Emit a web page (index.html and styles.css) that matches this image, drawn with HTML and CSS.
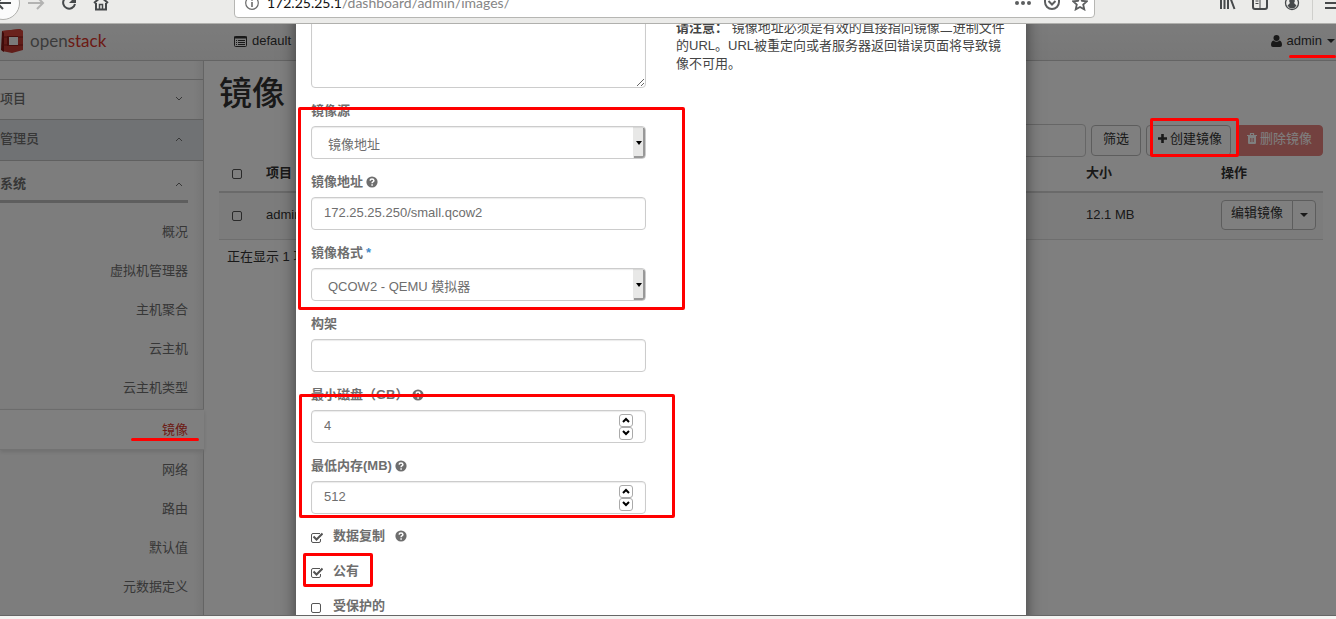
FILE: index.html
```html
<!DOCTYPE html>
<html lang="zh-CN">
<head>
  <meta charset="UTF-8" />
  <meta name="viewport" content="width=device-width, initial-scale=1.0"/>
  <title>镜像 - OpenStack Dashboard</title>
  <link rel="stylesheet" href="styles.css">
</head>
<body>

  <svg class="defs" aria-hidden="true">
    <symbol id="help" viewBox="0 0 12 12">
      <circle cx="6" cy="6" r="5.6" fill="currentColor"/>
      <path d="M4.1 4.6Q4.2 2.9 6 2.9T7.9 4.5Q7.9 5.4 6.9 5.9Q6.1 6.3 6.1 7.2M6.1 8.2V9.7" fill="none" stroke="#fff" stroke-width="1.5"/>
    </symbol>
    <symbol id="down" viewBox="0 0 8 6"><path d="M1 1l3 3 3-3" fill="none" stroke="currentColor"/></symbol>
    <symbol id="up" viewBox="0 0 8 6"><path d="M1 5l3-3 3 3" fill="none" stroke="currentColor"/></symbol>
    <symbol id="caret" viewBox="0 0 8 4"><path d="M0 0h8L4 4z" fill="currentColor"/></symbol>
  </svg>

  <div class="browser-bar">
    <div class="browser-row">
      <button class="back" aria-label="后退"><svg width="18" height="16" viewBox="0 0 18 16"><path d="M17 8H3M9 2L3 8l6 6" fill="none" stroke="#46494b" stroke-width="2"/></svg></button>
      <button class="tool forward" aria-label="前进"><svg width="18" height="16" viewBox="0 0 18 16"><path d="M1 8h14M10 2l6 6-6 6" fill="none" stroke="#b3b3b2" stroke-width="2"/></svg></button>
      <button class="tool" aria-label="刷新"><svg width="16" height="16" viewBox="0 0 16 16"><path d="M12.5 3.5A6 6 0 1 0 14 9" fill="none" stroke="#46494b" stroke-width="2"/><path d="M15 1v7H8z" fill="#46494b"/></svg></button>
      <button class="tool" aria-label="主页"><svg width="16" height="16" viewBox="0 0 16 16"><path d="M1 8l7-6 7 6M3 8v6.5h10V8" fill="none" stroke="#46494b" stroke-width="2"/><path d="M6.5 15V9.5h3V15" fill="none" stroke="#46494b" stroke-width="1.5"/></svg></button>
      <div class="url-box">
        <svg width="14" height="14" viewBox="0 0 14 14"><circle cx="7" cy="7" r="6.3" fill="none" stroke="#6b6b6b" stroke-width="1.2"/><path d="M7 6v5M7 3v1.8" stroke="#6b6b6b" stroke-width="1.6"/></svg>
        <div class="url"><b>172.25.25.1</b>/dashboard/admin/images/</div>
        <svg width="18" height="16" viewBox="0 0 18 16" fill="#5c5e5f"><circle cx="3" cy="8" r="2"/><circle cx="9" cy="8" r="2"/><circle cx="15" cy="8" r="2"/></svg>
        <svg width="16" height="16" viewBox="0 0 16 16" fill="none" stroke="#5c5e5f" stroke-width="2"><path d="M1 2h14v5a7 7 0 0 1-14 0z"/><path d="M4.5 6L8 9.5 11.5 6"/></svg>
        <svg width="16" height="16" viewBox="0 0 16 16"><path d="M8 1.5l2 4.3 4.8.5-3.6 3.2 1.1 4.9L8 12l-4.3 2.4 1.1-4.9L1.2 6.3 6 5.8z" fill="none" stroke="#5c5e5f" stroke-width="1.8"/></svg>
      </div>
      <button class="tool" aria-label="书库"><svg width="17" height="16" viewBox="0 0 17 16"><path d="M2 2v12M5.5 2v12M9 2v12M11 2l4.5 12" stroke="#46494b" stroke-width="2"/></svg></button>
      <button class="tool" aria-label="侧栏"><svg width="16" height="16" viewBox="0 0 16 16"><rect x="1" y="2" width="14" height="12" rx="2" fill="none" stroke="#46494b" stroke-width="2"/><path d="M8 2v12M3.5 6h3M3.5 8.5h3" stroke="#46494b"/></svg></button>
      <button class="tool" aria-label="帐户"><svg width="16" height="16" viewBox="0 0 16 16"><circle cx="8" cy="8" r="6.5" fill="none" stroke="#46494b" stroke-width="1.3"/><path d="M8 3a3 3 0 0 1 2 5l2.5 2.5A5 5 0 0 1 3.5 10.5L6 8a3 3 0 0 1 2-5z" fill="#46494b"/></svg></button>
      <div class="bar-sep"></div>
      <button class="tool menu" aria-label="菜单"><svg width="16" height="16" viewBox="0 0 16 16"><path d="M0 3h16M0 8h16M0 13h16" stroke="#46494b" stroke-width="2"/></svg></button>
    </div>
  </div>

  <div class="page">
    <header class="navbar">
      <a class="brand" href="#">
        <svg width="24" height="24" viewBox="0 0 24 24">
          <path d="M2 2L20 0 23 2V21L12 24 2 22z" fill="#c23a32"/>
          <path d="M2 2L20 0 23 2V8H2z" fill="#d4453a"/>
          <path d="M2 2L4 4V23L1 21z" fill="#7f1512"/>
          <path d="M7 7h11v10H7z" fill="#8f1d18"/>
          <path d="M9 8h9v8H9z" fill="#f5f5f5"/>
          <path d="M2 8h6M18 8h5M2 16h6M18 16h5" stroke="#8f1d18"/>
        </svg>
        <span>open<em>stack</em></span>
      </a>
      <a class="domain" href="#">
        <svg width="13" height="11" viewBox="0 0 13 11"><rect x=".5" y=".5" width="12" height="10" rx="1" fill="none" stroke="#333"/><path d="M0 1.5h13" stroke="#333" stroke-width="2"/><path d="M2 4.5h1M4 4.5h7M2 6.5h1M4 6.5h7M2 8.5h1M4 8.5h7" stroke="#333"/></svg>
        default
      </a>
      <a class="user" href="#">
        <svg width="11" height="12" viewBox="0 0 11 12" fill="#333"><circle cx="5.5" cy="3" r="3"/><path d="M0 10Q0 6 2.5 5.5Q5.5 8 8.5 5.5Q11 6 11 10Q11 12 9 12H2Q0 12 0 10z"/></svg>
        admin
        <svg width="8" height="4"><use href="#caret"/></svg>
      </a>
    </header>

    <div class="content">
      <nav class="sidebar">
        <a class="panel" href="#">项目 <svg width="8" height="6"><use href="#down"/></svg></a>
        <a class="panel open" href="#">管理员 <svg width="8" height="6"><use href="#up"/></svg></a>
        <a class="group" href="#">系统 <svg width="8" height="6"><use href="#up"/></svg></a>
        <ul>
          <li><a href="#">概况</a></li>
          <li><a href="#">虚拟机管理器</a></li>
          <li><a href="#">主机聚合</a></li>
          <li><a href="#">云主机</a></li>
          <li><a href="#">云主机类型</a></li>
          <li class="active"><a href="#">镜像</a></li>
          <li><a href="#">网络</a></li>
          <li><a href="#">路由</a></li>
          <li><a href="#">默认值</a></li>
          <li><a href="#">元数据定义</a></li>
        </ul>
      </nav>

      <main>
        <h1>镜像</h1>
        <div class="actions">
          <input class="search" type="text" aria-label="搜索">
          <button class="btn">筛选</button>
          <button class="btn create"><svg width="9" height="9" viewBox="0 0 9 9"><path d="M4.5 0v9M0 4.5h9" stroke="#333" stroke-width="2.6"/></svg> 创建镜像</button>
          <button class="btn danger"><svg width="10" height="11" viewBox="0 0 10 11"><path d="M0 2.5h10M3.5 2V.5h3V2" fill="none" stroke="#fff" stroke-width="1.2"/><path d="M1 3h8v6.5Q9 11 8 11H2Q1 11 1 9.5z" fill="#fff"/><path d="M3.5 5v4M5 5v4M6.5 5v4" stroke="#e0827f" stroke-width=".7"/></svg> 删除镜像</button>
        </div>
        <table>
          <thead>
            <tr>
              <th class="check"><input type="checkbox" aria-label="全选"></th>
              <th>项目</th>
              <th class="size">大小</th>
              <th class="ops">操作</th>
            </tr>
          </thead>
          <tbody>
            <tr>
              <td class="check"><input type="checkbox" aria-label="选择镜像"></td>
              <td>admin</td>
              <td>12.1 MB</td>
              <td>
                <div class="btn-group">
                  <button class="btn">编辑镜像</button>
                  <button class="btn toggle" aria-label="更多"><svg width="8" height="4"><use href="#caret"/></svg></button>
                </div>
              </td>
            </tr>
          </tbody>
        </table>
        <p class="count">正在显示 1 项</p>
      </main>
    </div>

    <div class="backdrop">
      <div class="modal" role="dialog" aria-label="创建镜像">
        <form>
          <textarea aria-label="描述"></textarea>

          <label for="source">镜像源</label>
          <select id="source"><option>镜像地址</option></select>

          <label for="location">镜像地址 <svg width="12" height="12"><use href="#help"/></svg></label>
          <input type="text" id="location" value="172.25.25.250/small.qcow2">

          <label for="format">镜像格式 <span class="required">*</span></label>
          <select id="format"><option>QCOW2 - QEMU 模拟器</option></select>

          <label for="arch">构架</label>
          <input type="text" id="arch">

          <label for="disk">最小磁盘（GB） <svg width="12" height="12"><use href="#help"/></svg></label>
          <div class="number">
            <input type="number" id="disk" value="4">
            <div class="spin">
              <button type="button" aria-label="增加"><svg width="8" height="6"><use href="#up"/></svg></button>
              <button type="button" aria-label="减少"><svg width="8" height="6"><use href="#down"/></svg></button>
            </div>
          </div>

          <label for="ram">最低内存(MB) <svg width="12" height="12"><use href="#help"/></svg></label>
          <div class="number">
            <input type="number" id="ram" value="512">
            <div class="spin">
              <button type="button" aria-label="增加"><svg width="8" height="6"><use href="#up"/></svg></button>
              <button type="button" aria-label="减少"><svg width="8" height="6"><use href="#down"/></svg></button>
            </div>
          </div>

          <div class="checks">
            <label><input type="checkbox" checked> 数据复制 <svg width="12" height="12"><use href="#help"/></svg></label>
            <label><input type="checkbox" checked> 公有</label>
            <label><input type="checkbox"> 受保护的</label>
          </div>
        </form>
        <div class="help-text">
          <p><strong>请注意：</strong> 镜像地址必须是有效的直接指向镜像二进制文件的URL。URL被重定向或者服务器返回错误页面将导致镜像不可用。</p>
        </div>
      </div>
    </div>
  </div>

  <div class="window-edge"></div>

  <!-- red marks -->
  <div class="mark mark-source"></div>
  <div class="mark mark-limits"></div>
  <div class="mark mark-public"></div>
  <div class="mark mark-create"></div>
  <div class="mark line mark-nav"></div>
  <div class="mark line mark-user"></div>

</body>
</html>
```
FILE: styles.css
```css
* {
  box-sizing: border-box;
}

body {
  margin: 0;
  height: 100vh;
  display: flex;
  flex-direction: column;
  position: relative;
  overflow: hidden;
  font-family: "Liberation Sans", "Noto Sans CJK SC", sans-serif;
  font-size: 13px;
  line-height: 18px;
  color: #333;
}

a {
  color: inherit;
  text-decoration: none;
}

button, input, select, textarea {
  font: inherit;
  color: inherit;
}

svg {
  flex: none;
}

.defs {
  position: absolute;
  width: 0;
  height: 0;
}

/* browser toolbar, scrolled half out of the window */
.browser-bar {
  flex: none;
  height: 24px;
  overflow: hidden;
  background: #ebebe9;
  border-bottom: 1px solid #b0b0ad;
}

.browser-row {
  display: flex;
  align-items: center;
  gap: 16px;
  height: 30px;
  margin-top: -12px;
}

.back, .tool {
  display: flex;
  align-items: center;
  padding: 0;
  border: none;
  background: none;
}

.back {
  justify-content: center;
  width: 34px;
  height: 34px;
  margin: 0 -9px 0 -14px;
  border: 1px solid #b0b0ad;
  border-radius: 50%;
  background: #fbfbfb;
}

.url-box {
  flex: 1;
  display: flex;
  align-items: center;
  gap: 12px;
  height: 30px;
  margin: 0 108px 0 109px;
  padding: 0 6px 0 10px;
  background: #fff;
  border: 1px solid #b6b6b3;
  border-radius: 4px;
}

.url {
  flex: 1;
  margin-left: -4px;
  font-family: Lato, "Open Sans", sans-serif;
  font-size: 14px;
  color: #858585;
}

.url b {
  font-weight: normal;
  color: #111;
}

.bar-sep {
  width: 1px;
  height: 34px;
  margin: 0 -4px;
  background: #cfcfcc;
}

.menu {
  margin-right: -5px;
}

/* dashboard */
.page {
  flex: 1;
  min-height: 0;
  display: flex;
  flex-direction: column;
  position: relative;
  overflow: hidden;
  background: #fff;
}

.navbar {
  flex: none;
  display: flex;
  align-items: center;
  height: 37px;
  padding-bottom: 2px;
  background: linear-gradient(#f8f8f8, #efefef);
  border-bottom: 1px solid #c8c8c8;
}

.brand {
  display: flex;
  align-items: center;
  gap: 6px;
  width: 234px;
  font-family: Lato, "Open Sans", sans-serif;
  font-size: 17px;
  color: #777;
}

.brand em {
  font-style: normal;
  color: #d8352a;
}

.domain, .user {
  display: flex;
  align-items: center;
  gap: 5px;
}

.user {
  margin-left: auto;
  padding-right: 1px;
}

.content {
  flex: 1;
  display: flex;
}

.sidebar {
  width: 204px;
  padding-top: 18px;
  background: linear-gradient(to left, #eee, #fbfbfb 10px);
  border-right: 1px solid #c8c8c8;
  color: #6e6e6e;
}

.panel, .group {
  display: flex;
  align-items: center;
  justify-content: space-between;
  padding-right: 20px;
}

.panel {
  height: 40px;
  padding-bottom: 2px;
  border-top: 1px solid #c0c0c0;
  font-weight: 500;
}

.panel.open {
  height: 42px;
  background: #e1e5e9;
  border-bottom: 1px solid #c0c0c0;
}

.group {
  height: 42px;
  margin-right: 15px;
  padding: 6px 5px 0 0;
  border-bottom: 3px solid #bcbcbc;
  font-weight: bold;
}

.sidebar ul {
  margin: 9px 0 0;
  padding: 0;
  list-style: none;
}

.sidebar li a {
  display: block;
  padding-right: 15px;
  line-height: 39px;
  text-align: right;
}

.sidebar li.active {
  margin: 2px -1px 0 0;
  padding-right: 1px;
  background: #fff;
  border-top: 1px solid #d8d8d8;
  border-bottom: 1px solid #e4e4e4;
  box-shadow: 0 2px 4px #ddd;
  color: #d9362b;
}

main {
  flex: 1;
  padding: 15px 13px 0 15px;
}

h1 {
  margin: 0;
  font-size: 33px;
  line-height: 36px;
  font-weight: 500;
}

.actions {
  display: flex;
  align-items: flex-start;
  justify-content: flex-end;
  gap: 5px;
  margin-top: 12px;
}

.search {
  width: 200px;
  height: 33px;
  border: 1px solid #ccc;
  border-radius: 4px;
  background: #fff;
}

.btn {
  display: flex;
  align-items: center;
  justify-content: center;
  gap: 3px;
  height: 31px;
  padding: 0 11px 4px;
  margin-top: 1px;
  background: #fff;
  border: 1px solid #bbb;
  border-radius: 4px;
}

.create {
  padding: 0 8px 4px 11px;
}

.danger {
  padding: 0 10px 4px;
  background: #e6837f;
  border-color: #e6837f;
  color: #fff;
}

table {
  width: 100%;
  border-collapse: collapse;
}

th, td {
  padding: 0;
  text-align: left;
}

th {
  height: 35px;
  padding-bottom: 3px;
  border-bottom: 2px solid #d4d4d4;
}

td {
  height: 47px;
  padding-bottom: 2px;
  background: #f9f9f9;
  border-bottom: 1px solid #ddd;
}

.check {
  width: 47px;
  padding-left: 13px;
}

.size {
  width: 135px;
}

.ops {
  width: 102px;
}

.btn-group {
  display: flex;
}

.btn-group .btn {
  height: 30px;
  margin: 0;
  padding: 0 9px 4px;
  border-radius: 4px 0 0 4px;
}

.btn-group .toggle {
  margin-left: -1px;
  padding: 0 7px;
  border-radius: 0 4px 4px 0;
}

.count {
  margin: 8px;
}

input[type="checkbox"] {
  appearance: none;
  flex: none;
  display: block;
  width: 10px;
  height: 10px;
  margin: 3px 0 0;
  border: 1px solid #555;
  border-radius: 2px;
}

/* modal */
.backdrop {
  position: absolute;
  inset: 0;
  display: flex;
  justify-content: center;
  align-items: flex-start;
  padding-right: 14px;
  overflow: hidden;
  background: rgba(0, 0, 0, 0.5);
}

.modal {
  display: grid;
  grid-template-columns: 1fr 1fr;
  gap: 30px;
  width: 730px;
  margin-top: -20px;
  padding: 15px 15px 40px;
  background: #fff;
  box-shadow: 0 5px 15px rgba(0, 0, 0, 0.5);
}

form {
  display: flex;
  flex-direction: column;
  color: #6e6e6e;
}

form label {
  display: flex;
  align-items: center;
  gap: 3px;
  margin: 14px 0 6px;
  font-weight: bold;
}

.required {
  color: #428bca;
}

textarea, select, .number, form > input {
  width: 100%;
  height: 33px;
  padding: 0 12px 2px;
  background: #fff;
  border: 1px solid #ccc;
  border-radius: 4px;
  box-shadow: inset 0 1px 1px rgba(0, 0, 0, 0.08);
}

textarea {
  height: 69px;
  resize: vertical;
}

select {
  appearance: none;
  padding: 5px 16px 0;
  background: url("data:image/svg+xml,%3Csvg xmlns='http://www.w3.org/2000/svg' width='12' height='31'%3E%3Cpath fill='%23e8e8e7' d='M0 0h12v31H0z'/%3E%3Cpath fill='none' stroke='%23999' stroke-width='2' d='M11 1v29H1'/%3E%3Cpath d='M3 14h6l-3 4z'/%3E%3C/svg%3E") no-repeat right center;
}

.number {
  display: flex;
  align-items: center;
  padding: 0 12px;
}

.number input {
  flex: 1;
  min-width: 0;
  padding: 0 0 2px;
  border: none;
  background: none;
  appearance: textfield;
}

.number input::-webkit-inner-spin-button {
  appearance: none;
}

.spin button {
  display: flex;
  align-items: center;
  justify-content: center;
  width: 14px;
  height: 13px;
  padding: 0;
  background: #fff;
  border: 1px solid #aaa;
  border-radius: 3px;
  color: #000;
}

.spin svg {
  stroke-width: 2;
}

.checks {
  display: flex;
  flex-direction: column;
  gap: 17px;
  margin-top: 13px;
}

.checks label {
  gap: 10px;
  margin: 0;
}

.checks input {
  margin-right: 2px;
}

.checks input:checked {
  width: 12px;
  height: 11px;
  margin-right: 0;
  border: none;
  border-radius: 0;
  background: url("data:image/svg+xml,%3Csvg xmlns='http://www.w3.org/2000/svg' width='12' height='11' fill='none' stroke='%23555'%3E%3Cpath d='M9 1.5H2Q.5 1.5 .5 3v6Q.5 10.5 2 10.5h6Q9.5 10.5 9.5 9V7'/%3E%3Cpath stroke-width='2' d='M2.5 4.5L5.5 7.5 11.5 1.5'/%3E%3C/svg%3E") no-repeat;
}

.help-text p {
  margin: 0;
  color: #444;
}

.window-edge {
  flex: none;
  height: 4px;
  background: #f4f4f2;
  border-top: 1px solid #666;
}

.mark {
  position: absolute;
  border: 3px solid #f00;
  border-radius: 2px;
  pointer-events: none;
}

.mark-source {
  left: 298px;
  top: 107px;
  width: 387px;
  height: 203px;
}

.mark-limits {
  left: 299px;
  top: 394px;
  width: 376px;
  height: 124px;
}

.mark-public {
  left: 303px;
  top: 553px;
  width: 70px;
  height: 34px;
}

.mark-create {
  right: 97px;
  top: 118px;
  width: 89px;
  height: 39px;
}

.line {
  height: 0;
  border-width: 3px 0 0;
}

.mark-nav {
  left: 131px;
  top: 438px;
  width: 68px;
}

.mark-user {
  right: 0;
  top: 55px;
  width: 47px;
}
```
